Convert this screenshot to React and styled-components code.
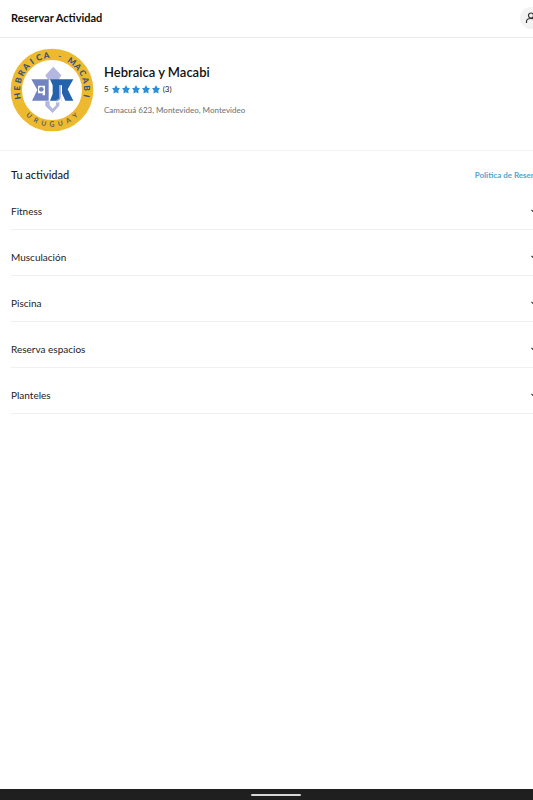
import React from 'react';
import styled, { createGlobalStyle } from 'styled-components';

const GlobalStyle = createGlobalStyle`
  *, *::before, *::after { box-sizing: border-box; }
  body {
    margin: 0;
    background: #fff;
    color: #1c1c1c;
    font-family: Lato, 'Open Sans', sans-serif;
  }
  button { font: inherit; color: inherit; border: 0; padding: 0; background: none; cursor: pointer; }
`;

const Screen = styled.div`
  display: flex;
  flex-direction: column;
  min-height: 100vh;
  overflow: hidden;
`;

/* The booking sheet is slightly wider than the viewport and runs off its right side. */
const Sheet = styled.div`
  flex: 1;
  margin-right: -20px;
`;

const Header = styled.header`
  display: flex;
  align-items: center;
  justify-content: space-between;
  height: 38px;
  padding: 0 11px 1px;
  border-bottom: 1px solid #ececec;
`;

const PageTitle = styled.h1`
  margin: 0;
  font-size: 11px;
  line-height: 16px;
  font-weight: 700;
  color: #111;
`;

const Avatar = styled.button`
  display: grid;
  place-items: center;
  width: 22px;
  height: 22px;
  border-radius: 50%;
  background: #f3f3f3;
`;

const Club = styled.section`
  display: flex;
  align-items: flex-start;
  gap: 10px;
  padding: 10px 10px 18px;
  border-bottom: 1px solid #f3f3f3;
`;

const Logo = styled.svg`
  display: block;
  flex: none;
  width: 84px;
  height: 84px;
`;

const ClubInfo = styled.div`
  padding-top: 15px;
`;

const ClubName = styled.h2`
  margin: 0;
  font-size: 13px;
  line-height: 18px;
  font-weight: 600;
  color: #111;
`;

const Rating = styled.div`
  display: flex;
  align-items: center;
  gap: 3px;
  font-size: 8px;
  line-height: 16px;
`;

const Stars = styled.svg`
  display: block;
  width: 48px;
  height: 9px;
`;

const Address = styled.p`
  margin: 6px 0 0;
  font-size: 8px;
  line-height: 14px;
  font-weight: 500;
  color: #777;
`;

const Activities = styled.main`
  padding: 0 11px;
`;

const SectionHead = styled.div`
  display: flex;
  align-items: center;
  justify-content: space-between;
  padding: 16px 0 11px;
`;

const SectionTitle = styled.h3`
  margin: 0;
  font-size: 11px;
  line-height: 16px;
  font-weight: 500;
`;

const PolicyLink = styled.a`
  font-size: 8px;
  line-height: 12px;
  font-weight: 700;
  color: #4fa5d3;
  text-decoration: none;
`;

const List = styled.ul`
  margin: 0;
  padding: 0;
  list-style: none;
  display: grid;
  gap: 10px;
`;

const Row = styled.button`
  display: flex;
  align-items: center;
  justify-content: space-between;
  width: 100%;
  height: 36px;
  padding: 0 4px 1px 0;
  border-bottom: 1px solid #f0f0f0;
  font-size: 10px;
  line-height: 14px;
  font-weight: 400;
  text-align: left;
`;

const NavBar = styled.footer`
  display: flex;
  justify-content: center;
  align-items: center;
  height: 11px;
  padding-left: 19px;
  background: #1f1f1f;
`;

const NavHandle = styled.span`
  width: 50px;
  height: 2px;
  border-radius: 1px;
  background: #d8d8d8;
`;

const activities = ['Fitness', 'Musculación', 'Piscina', 'Reserva espacios', 'Planteles'];

/* Sets the letters of a word around the ring, each turned to its own angle. */
function RingText({ word, from, step, baseline }) {
  return [...word].map((letter, i) => (
    <text key={i} x="126" y={baseline} textAnchor="middle" transform={`rotate(${from + step * i} 126 126)`}>
      {letter}
    </text>
  ));
}

function ClubLogo() {
  return (
    <Logo viewBox="0 0 252 252" role="img" aria-label="Hebraica Macabi Uruguay">
      <circle cx="126" cy="126" r="107" fill="#fff" stroke="#edb92f" strokeWidth="34" />
      <g fontFamily="Lato, sans-serif" fontWeight="900" fontSize="25" fill="#33567c">
        <RingText word="HEBRAICA" from={-100} step={13} baseline={30} />
        <RingText word="-" from={13} step={13} baseline={30} />
        <RingText word="MACABI" from={35} step={13} baseline={30} />
      </g>
      <g fontFamily="Lato, sans-serif" fontWeight="700" fontSize="20" fill="#5d6558">
        <RingText word="URUGUAY" from={42} step={-14} baseline={236} />
      </g>
      <path d="M130 56 154 82 146 95H114L106 82Z" fill="#b4b8e0" />
      <path d="M106 160H119V172L128 182 138 172V160H148V173L128 195 106 174Z" fill="#b4b8e0" />
      <path d="M64 94H116V158H66L82 126Z" fill="#7383c2" />
      <path d="M84 113H105V142H98V136H84Z" fill="#fff" />
      <circle cx="94" cy="124" r="7" fill="#7383c2" />
      <path d="M120 94H190L173 124 190 158H166L154 132V158H120L128 138V112Z" fill="#2462ab" />
      <path d="M152 112V148Q152 160 139 160" fill="none" stroke="#fff" strokeWidth="8" />
      <path d="M150 112V146Q150 156 138 158" fill="none" stroke="#8397cf" strokeWidth="4" />
    </Logo>
  );
}

const starOffsets = [0, 10, 20, 30, 40];

function StarRow() {
  return (
    <Stars viewBox="0 0 48 9" fill="#2d8fd5" role="img" aria-label="5 estrellas">
      {starOffsets.map((x) => (
        <path
          key={x}
          transform={`translate(${x} 0)`}
          d="M4 0 5.300 2.700 8 3.200 6.200 5.400 6.600 8.400 4 7.200 1.400 8.400 1.800 5.400 0 3.200 2.700 2.700Z"
        />
      ))}
    </Stars>
  );
}

export default function App() {
  return (
    <Screen>
      <GlobalStyle />
      <Sheet>
        <Header>
          <PageTitle>Reservar Actividad</PageTitle>
          <Avatar aria-label="Cuenta">
            <svg width="12" height="12" viewBox="0 0 12 12" fill="none" stroke="#333" strokeWidth="1.200">
              <circle cx="6" cy="3.500" r="2.500" />
              <path d="M1.500 11V9.500C1.500 7.500 3 6.500 6 6.500S10.500 7.500 10.500 9.500V11" />
            </svg>
          </Avatar>
        </Header>
        <Club>
          <ClubLogo />
          <ClubInfo>
            <ClubName>Hebraica y Macabi</ClubName>
            <Rating>
              <span>5</span>
              <StarRow />
              <span>(3)</span>
            </Rating>
            <Address>Camacuá 623, Montevideo, Montevideo</Address>
          </ClubInfo>
        </Club>
        <Activities>
          <SectionHead>
            <SectionTitle>Tu actividad</SectionTitle>
            <PolicyLink href="#politica">Politica de Reserva</PolicyLink>
          </SectionHead>
          <List>
            {activities.map((name) => (
              <li key={name}>
                <Row aria-expanded="false">
                  {name}
                  <svg width="7" height="5" viewBox="0 0 7 5" fill="none" stroke="#333" strokeWidth="1.200">
                    <path d="M.5 .8 3.500 3.800 6.500 .8" />
                  </svg>
                </Row>
              </li>
            ))}
          </List>
        </Activities>
      </Sheet>
      <NavBar>
        <NavHandle />
      </NavBar>
    </Screen>
  );
}
